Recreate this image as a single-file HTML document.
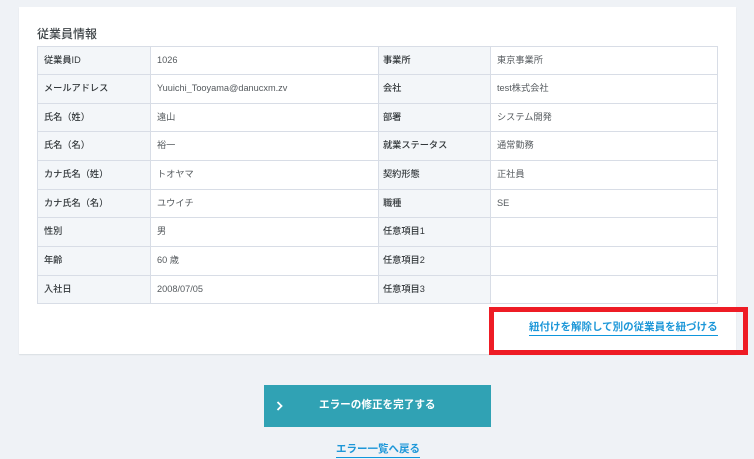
<!DOCTYPE html>
<html lang="ja"><head><meta charset="utf-8">
<style>
html,body{margin:0;padding:0}
body{width:754px;height:459px;overflow:hidden;background:#eff2f6;position:relative;font-family:"Liberation Sans","Noto Sans CJK JP",sans-serif;color:#3b4043}
.card{position:absolute;left:19px;top:7px;width:717px;height:347px;background:#fff;box-shadow:0 1px 1px #d9dde2}
.h{position:absolute;left:37px;top:26px;font-size:12px;line-height:16px;font-weight:500;color:#3f4548;filter:blur(.3px)}
.t{position:absolute;white-space:nowrap;font-size:9.2px;line-height:12px;filter:blur(.3px)}
.l{font-weight:500;color:#33383b}
.v{color:#555a5e}
.bg{position:absolute;background:#f3f6f9}
.ln{position:absolute;background:#d8dde6}
.red{position:absolute;left:489px;top:307px;width:249px;height:38px;border:5px solid #ee1c25}
.a{position:absolute;white-space:nowrap;font-size:10.5px;line-height:15px;font-weight:700;color:#1d97d8;border-bottom:1px solid #0f96dc}
.a span{display:inline-block;filter:blur(.25px)}
.btn{position:absolute;left:264px;top:385px;width:227px;height:42px;background:#30a2b4}
.btn span{position:absolute;left:55px;top:13px;white-space:nowrap;font-size:10.6px;line-height:15px;font-weight:700;color:#fff;filter:blur(.25px)}
.btn svg{position:absolute;left:12px;top:16px}
</style></head><body>
<div class="card"></div>
<div class="h">従業員情報</div>
<div class="bg" style="left:37px;top:46px;width:113px;height:258px"></div>
<div class="bg" style="left:378px;top:46px;width:112px;height:258px"></div>
<div class="ln" style="left:37px;top:46px;width:681px;height:1px"></div>
<div class="ln" style="left:37px;top:74px;width:681px;height:1px"></div>
<div class="ln" style="left:37px;top:103px;width:681px;height:1px"></div>
<div class="ln" style="left:37px;top:131px;width:681px;height:1px"></div>
<div class="ln" style="left:37px;top:160px;width:681px;height:1px"></div>
<div class="ln" style="left:37px;top:189px;width:681px;height:1px"></div>
<div class="ln" style="left:37px;top:217px;width:681px;height:1px"></div>
<div class="ln" style="left:37px;top:246px;width:681px;height:1px"></div>
<div class="ln" style="left:37px;top:275px;width:681px;height:1px"></div>
<div class="ln" style="left:37px;top:303px;width:681px;height:1px"></div>
<div class="ln" style="left:37px;top:46px;width:1px;height:258px"></div>
<div class="ln" style="left:150px;top:46px;width:1px;height:258px"></div>
<div class="ln" style="left:378px;top:46px;width:1px;height:258px"></div>
<div class="ln" style="left:490px;top:46px;width:1px;height:258px"></div>
<div class="ln" style="left:717px;top:46px;width:1px;height:258px"></div>

<div class="t l" style="left:44px;top:54px">従業員ID</div><div class="t v" style="left:157px;top:54px">1026</div>
<div class="t l" style="left:383px;top:54px">事業所</div><div class="t v" style="left:497px;top:54px">東京事業所</div>
<div class="t l" style="left:44px;top:82px">メールアドレス</div><div class="t v" style="left:157px;top:82px">Yuuichi_Tooyama@danucxm.zv</div>
<div class="t l" style="left:383px;top:82px">会社</div><div class="t v" style="left:497px;top:82px">test株式会社</div>
<div class="t l" style="left:44px;top:111px">氏名（姓）</div><div class="t v" style="left:157px;top:111px">遠山</div>
<div class="t l" style="left:383px;top:111px">部署</div><div class="t v" style="left:497px;top:111px">システム開発</div>
<div class="t l" style="left:44px;top:139px">氏名（名）</div><div class="t v" style="left:157px;top:139px">裕一</div>
<div class="t l" style="left:383px;top:139px">就業ステータス</div><div class="t v" style="left:497px;top:139px">通常勤務</div>
<div class="t l" style="left:44px;top:168px">カナ氏名（姓）</div><div class="t v" style="left:157px;top:168px">トオヤマ</div>
<div class="t l" style="left:383px;top:168px">契約形態</div><div class="t v" style="left:497px;top:168px">正社員</div>
<div class="t l" style="left:44px;top:197px">カナ氏名（名）</div><div class="t v" style="left:157px;top:197px">ユウイチ</div>
<div class="t l" style="left:383px;top:197px">職種</div><div class="t v" style="left:497px;top:197px">SE</div>
<div class="t l" style="left:44px;top:225px">性別</div><div class="t v" style="left:157px;top:225px">男</div>
<div class="t l" style="left:383px;top:225px">任意項目1</div>
<div class="t l" style="left:44px;top:254px">年齢</div><div class="t v" style="left:157px;top:254px">60 歳</div>
<div class="t l" style="left:383px;top:254px">任意項目2</div>
<div class="t l" style="left:44px;top:283px">入社日</div><div class="t v" style="left:157px;top:283px">2008/07/05</div>
<div class="t l" style="left:383px;top:283px">任意項目3</div>

<div class="red"></div>
<div class="a" style="left:529px;top:320px;width:189px"><span>紐付けを解除して別の従業員を紐づける</span></div>
<div class="btn"><svg width="8" height="10" viewBox="0 0 8 10"><path d="M1.5 1 L5.5 5 L1.5 9" fill="none" stroke="#fff" stroke-width="1.8"/></svg><span>エラーの修正を完了する</span></div>
<div class="a" style="left:336px;top:442px;width:84px"><span>エラー一覧へ戻る</span></div>
</body></html>
